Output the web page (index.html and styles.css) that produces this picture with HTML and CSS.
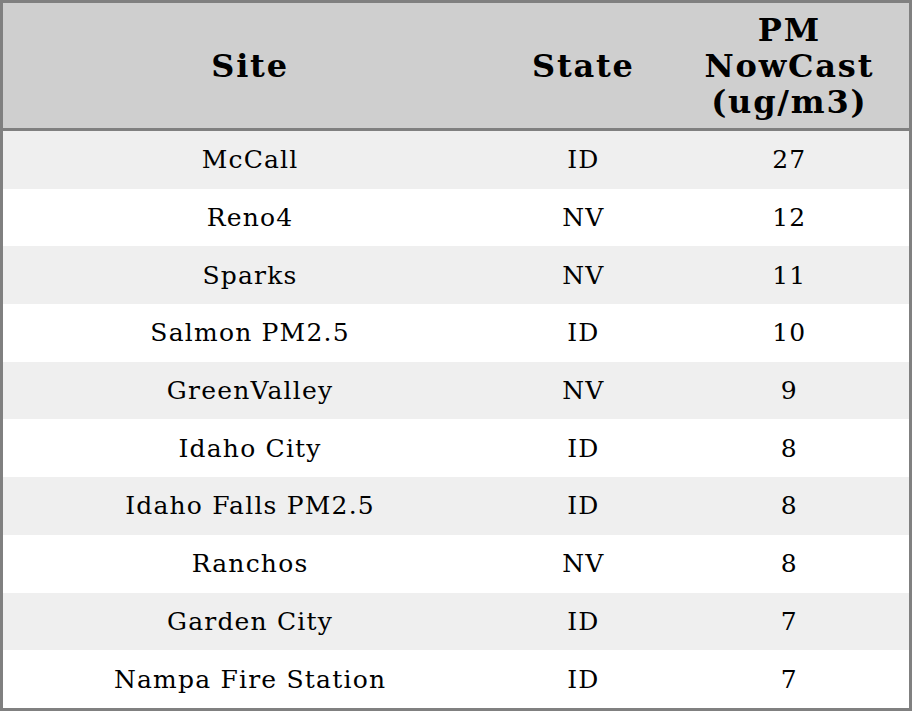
FILE: index.html
```html
<!DOCTYPE html>
<html>
<head>
<meta charset="utf-8">
<link rel="stylesheet" href="styles.css">
</head>
<body>
<table class="tbl">
  <colgroup>
    <col class="c-site">
    <col class="c-state">
    <col class="c-pm">
  </colgroup>
  <thead>
    <tr><th>Site</th><th>State</th><th>PM<br>NowCast<br>(ug/m3)</th></tr>
  </thead>
  <tbody>
    <tr><td>McCall</td><td>ID</td><td>27</td></tr>
    <tr><td>Reno4</td><td>NV</td><td>12</td></tr>
    <tr><td>Sparks</td><td>NV</td><td>11</td></tr>
    <tr><td>Salmon PM2.5</td><td>ID</td><td>10</td></tr>
    <tr><td>GreenValley</td><td>NV</td><td>9</td></tr>
    <tr><td>Idaho City</td><td>ID</td><td>8</td></tr>
    <tr><td>Idaho Falls PM2.5</td><td>ID</td><td>8</td></tr>
    <tr><td>Ranchos</td><td>NV</td><td>8</td></tr>
    <tr><td>Garden City</td><td>ID</td><td>7</td></tr>
    <tr><td>Nampa Fire Station</td><td>ID</td><td>7</td></tr>
  </tbody>
</table>
</body>
</html>
```
FILE: styles.css
```css
html, body {
  margin: 0;
  padding: 0;
  background: #ffffff;
}
.tbl {
  width: 912px;
  height: 711px;
  border-collapse: collapse;
  border: 3px solid #808080;
  font-family: "DejaVu Serif", serif;
  color: #000;
}
.c-site { width: 494px; }
.c-state { width: 172px; }
.c-pm { width: 240px; }
.tbl th {
  background: #cfcfcf;
  font-size: 32px;
  font-weight: bold;
  line-height: 36px;
  letter-spacing: 1.8px;
  height: 125px;
  padding: 0;
  text-align: center;
  vertical-align: middle;
  border-bottom: 3px solid #808080;
}
.tbl td {
  font-size: 25px;
  letter-spacing: 1.2px;
  height: 57.7px;
  padding: 0;
  text-align: center;
  vertical-align: middle;
}
.tbl tbody tr:nth-child(odd) td { background: #efefef; }
.tbl tbody tr:nth-child(even) td { background: #ffffff; }
```
